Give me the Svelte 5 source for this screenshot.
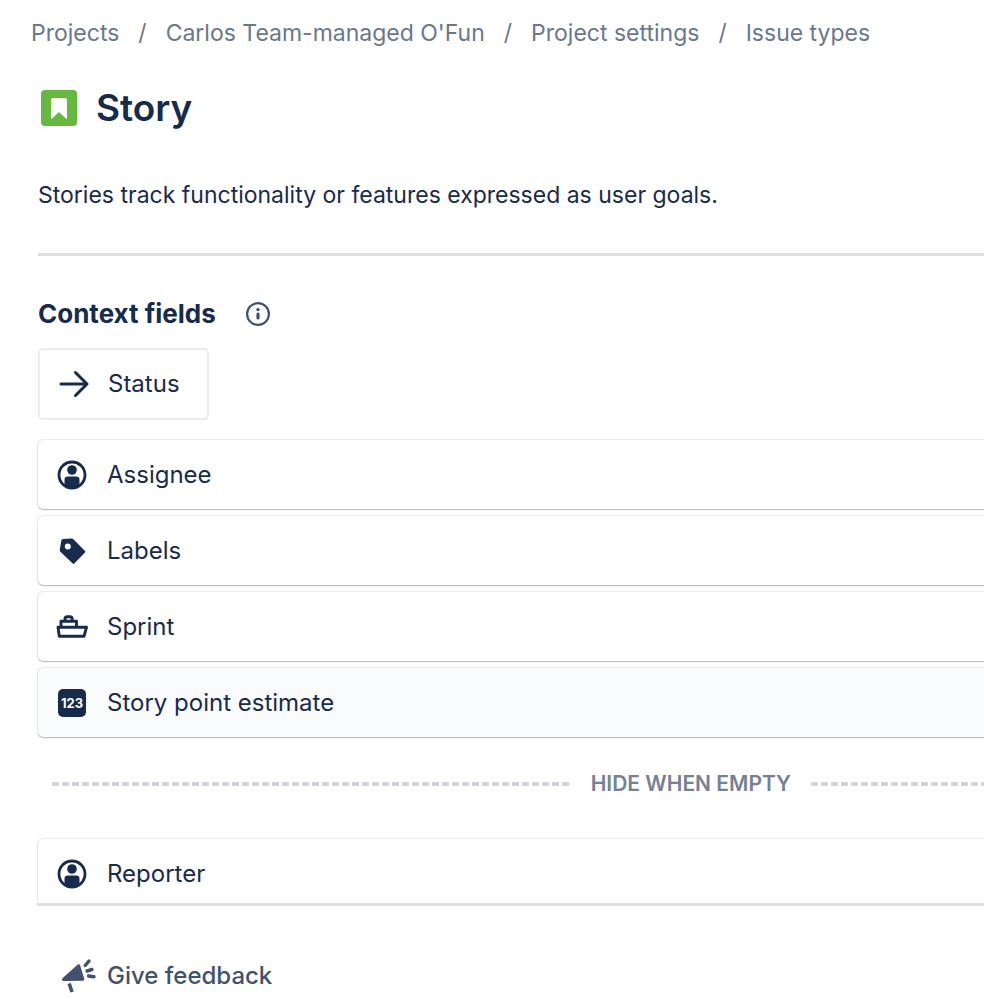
<script>
    const crumbs = ['Projects', "Carlos Team-managed O'Fun", 'Project settings', 'Issue types'];

    const fields = [
        { name: 'Assignee', icon: 'person' },
        { name: 'Labels', icon: 'label' },
        { name: 'Sprint', icon: 'ship' },
        { name: 'Story point estimate', icon: 'number', active: true }
    ];

    const hiddenFields = [
        { name: 'Reporter', icon: 'person' }
    ];
</script>

{#snippet fieldIcon(icon)}
    {#if icon === 'number'}
        <span class="icon"><span class="number">123</span></span>
    {:else}
        <svg class="icon" viewBox="0 0 36 36" aria-hidden="true">
            {#if icon === 'person'}
                <circle cx="18" cy="18" r="13" fill="none" stroke="currentColor" stroke-width="2.8" />
                <circle cx="18" cy="13" r="4.8" fill="currentColor" />
                <path d="M10.500 27V22.800q0-3.300 3.300-3.300h8.400q3.300 0 3.300 3.300V27l-2 3h-11z" fill="currentColor" />
            {:else if icon === 'label'}
                <path
                    d="M7.300 7.800Q7.500 6.300 9 6.100L17 5.400q1.500-.1 2.400.8L31 17.900q.8.800 0 1.600L20.300 30.400q-.8.700-1.600 0L6.400 18.800q-.8-.8-.7-1.900zM13.800 10.400a3 3 0 1 0 0 6 3 3 0 0 0 0-6z"
                    fill="currentColor"
                    fill-rule="evenodd"
                />
            {:else if icon === 'ship'}
                <g fill="none" stroke="currentColor" stroke-width="2.900" stroke-linejoin="round">
                    <path d="M4 18.300H32.500L30 27.300H5.300z" />
                    <path d="M7 18.300V12.300H22.500V18.300" />
                    <path d="M11 12.300V10q0-2.300 2.300-2.300h2.600q2.300 0 2.300 2.300v2.300" />
                </g>
            {/if}
        </svg>
    {/if}
{/snippet}

<main>
    <nav aria-label="Breadcrumb">
        <ol class="crumbs">
            {#each crumbs as crumb}
                <li><a href="#top">{crumb}</a></li>
            {/each}
        </ol>
    </nav>

    <div class="content">
        <header class="title">
            <svg class="story-icon" viewBox="0 0 36 36" aria-hidden="true">
                <rect width="36" height="36" rx="4" fill="#63ba3c" />
                <path d="M10 10q0-2 2-2h12q2 0 2 2v18.200q0 1.200-1 .4L18 22l-7 6.600q-1 .8-1-.4z" fill="#fff" />
            </svg>
            <h1>Story</h1>
        </header>
        <p class="description">Stories track functionality or features expressed as user goals.</p>
    </div>

    <section class="content fields">
        <div class="heading">
            <h2>Context fields</h2>
            <button type="button" class="info" aria-label="About context fields">
                <svg viewBox="0 0 26 26" aria-hidden="true">
                    <circle cx="13" cy="13" r="10.900" fill="none" stroke="currentColor" stroke-width="2.200" />
                    <circle cx="13" cy="8.600" r="1.700" fill="currentColor" />
                    <path d="M13 13v4" stroke="currentColor" stroke-width="3.200" stroke-linecap="round" />
                </svg>
            </button>
        </div>

        <button type="button" class="status">
            <svg class="icon" viewBox="0 0 36 36" aria-hidden="true">
                <path
                    d="M5 18H31M19.500 6.500L31 18 19.500 29.500"
                    fill="none"
                    stroke="currentColor"
                    stroke-width="3"
                    stroke-linecap="round"
                    stroke-linejoin="round"
                />
            </svg>
            Status
        </button>

        <div class="list">
            {#each fields as field}
                <button type="button" class="field" class:active={field.active}>
                    {@render fieldIcon(field.icon)}
                    {field.name}
                </button>
            {/each}
        </div>

        <div class="divider">
            <span class="dashes"></span>
            <span class="divider-text">HIDE WHEN EMPTY</span>
            <span class="dashes short"></span>
        </div>

        <div class="list clipped">
            {#each hiddenFields as field}
                <button type="button" class="field">
                    {@render fieldIcon(field.icon)}
                    {field.name}
                </button>
            {/each}
        </div>

        <button type="button" class="feedback">
            <svg class="icon" viewBox="0 0 36 36" aria-hidden="true">
                <path d="M17.800 6.500q1.700-1 2.300.8l4.200 13.500q.5 1.900-1.300 1.900L4 22.900q-3.600-.3-1.300-3z" fill="currentColor" />
                <g fill="none" stroke="currentColor" stroke-width="3.600">
                    <path d="M9.200 25.500l2.800 8.500" />
                    <path d="M25.200 7.500L29 3M27 13l5-1.500M28.500 18l5.500.8" stroke-width="3.400" stroke-linecap="round" />
                </g>
            </svg>
            Give feedback
        </button>
    </section>
</main>

<style>
    :global(body) {
        margin: 0;
        background: #fff;
    }

    main {
        --text-color: #172b4d;
        --muted-color: #6b778c;
        font-family: Inter, "Liberation Sans", sans-serif;
        font-size: 24px;
        line-height: 32px;
        color: var(--text-color);
        overflow: hidden;
    }

    h1, h2, p, ol {
        margin: 0;
        padding: 0;
    }

    button {
        font: inherit;
        color: inherit;
        background: none;
        border: none;
        padding: 0;
        cursor: pointer;
    }

    .crumbs {
        display: flex;
        list-style: none;
        padding: 17px 0 0 31px;
        font-size: 23px;
        white-space: nowrap;
        color: var(--muted-color);
    }

    .crumbs li + li::before {
        content: "/";
        margin: 0 19px;
    }

    .crumbs a {
        color: inherit;
        text-decoration: none;
    }

    .content {
        margin-left: 38px;
    }

    .title {
        display: flex;
        align-items: center;
        gap: 19px;
        padding: 34px 0 0 3px;
    }

    .story-icon {
        width: 36px;
        height: 36px;
    }

    h1 {
        font-size: 37px;
        font-weight: 600;
        line-height: 50px;
    }

    .description {
        padding: 46px 0 42px;
        border-bottom: 3px solid #dddee1;
        font-size: 23px;
    }

    .fields {
        padding-top: 40px;
    }

    .heading {
        display: flex;
        align-items: center;
        gap: 29px;
    }

    h2 {
        font-size: 26px;
        font-weight: 700;
        line-height: 36px;
    }

    .info, .info svg {
        display: block;
        width: 26px;
        height: 26px;
    }

    .info {
        color: #42526e;
    }

    .icon {
        flex: none;
        display: flex;
        align-items: center;
        justify-content: center;
        width: 36px;
        height: 36px;
    }

    .status {
        display: flex;
        align-items: center;
        gap: 16px;
        height: 72px;
        margin: 16px 0 20px;
        padding: 0 27px 0 16px;
        border: 2px solid #ebecf0;
        border-radius: 5px;
    }

    .list {
        display: grid;
        gap: 7px;
        margin-right: -10px;
    }

    .field {
        display: flex;
        align-items: center;
        gap: 17px;
        height: 69px;
        padding: 0 16px;
        background: #fff;
        border-radius: 5px;
        box-shadow: 0 1px 1px rgba(9, 30, 66, 0.24), 0 0 2px rgba(9, 30, 66, 0.3);
        text-align: left;
    }

    .field.active {
        background: #fafbfc;
    }

    .number {
        width: 28px;
        background: var(--text-color);
        color: #fff;
        border-radius: 5px;
        font-size: 13px;
        font-weight: 700;
        line-height: 28px;
        text-align: center;
    }

    .divider {
        display: flex;
        align-items: center;
        gap: 20px;
        margin: 31px 0 38px 14px;
    }

    .dashes {
        flex: 3;
        height: 4px;
        background: repeating-linear-gradient(90deg, #d0d4dc 0 7px, transparent 7px 10px);
    }

    .dashes.short {
        flex: 1;
    }

    .divider-text {
        color: #758195;
        font-size: 21px;
        font-weight: 600;
    }

    .clipped {
        overflow: hidden;
        padding: 1px 0 0 1px;
        margin-left: -1px;
        height: 64px;
        border-bottom: 3px solid #dddee3;
    }

    .clipped .field {
        padding-left: 16px;
    }

    .feedback {
        display: flex;
        align-items: center;
        gap: 11px;
        padding: 52px 0 0 22px;
        color: #42526e;
        font-weight: 500;
    }
</style>
